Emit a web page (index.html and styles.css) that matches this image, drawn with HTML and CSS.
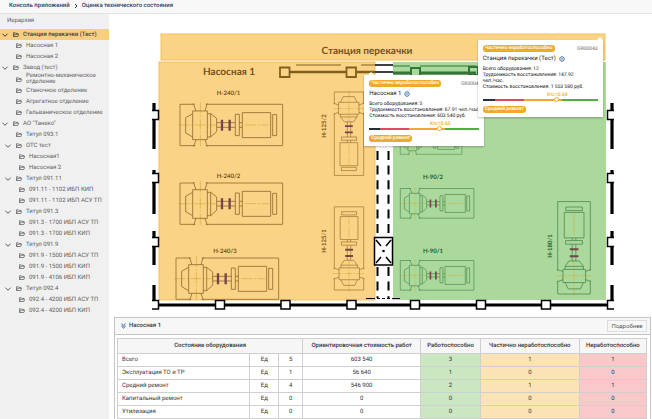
FILE: index.html
```html
<!DOCTYPE html>
<html lang="ru">
<head>
<meta charset="utf-8">
<title>Оценка технического состояния</title>
<link rel="stylesheet" href="styles.css">
</head>
<body>
<svg class="defs" aria-hidden="true">
  <symbol id="chevron" viewBox="0 0 8 8"><path d="M1.5 2.7 4 5.3 6.5 2.7"/></symbol>
  <symbol id="folder" viewBox="0 0 12 10"><path d="M1 9V1.5h3.5l1.2 1.3H9.500V4.500M1 9l2.300-4.500H11.500L9.600 9z"/></symbol>
  <symbol id="gear" viewBox="0 0 12 12"><circle cx="6" cy="6" r="4.500" stroke-width="1.500"/><circle cx="6" cy="6" r="1.600"/><path d="M6 0v2M6 10v2M0 6h2M10 6h2M1.800 1.800l1.400 1.400M8.800 8.800l1.400 1.400M10.200 1.800 8.800 3.200M3.200 8.800l-1.400 1.400"/></symbol>
  <g id="pump">
    <path class="axis" d="M61-6V130M-6 62H112M195 62H268"/>
    <path d="M44 0H0V124H46M77 0H308V124H77M40-3 48 20M82-3 75 20M48 106 41 127M75 106 82 127"/>
    <path d="M38 20H82V106H38ZM38 28 17 40V86L38 98M82 28H92L110 42V82L92 98H82M92 28V98"/>
    <path d="M110 55H166M110 69H166M166 30H178V94H166ZM178 55H187M178 69H187M187 25H272V100H187ZM278 31H290V94H278Z"/>
    <path class="coupling" d="M126 46V79M149 46V79"/>
  </g>
</svg>

<header class="topbar">
  <nav class="crumbs" aria-label="Навигация">
    <a href="#">Консоль приложений</a>
    <svg class="crumb-arrow" viewBox="0 0 6 8"><path d="M1.500 1 4.500 4 1.500 7"/></svg>
    <a href="#">Оценка технического состояния</a>
  </nav>
</header>

<div class="layout">
  <aside class="sidebar">
    <h2 class="sidebar-title">Иерархия</h2>
    <ul class="tree">
      <li class="node selected"><button class="toggle" aria-label="Свернуть"><svg><use href="#chevron"/></svg></button><svg class="folder"><use href="#folder"/></svg><a href="#">Станция перекачки (Тест)</a></li>
      <li class="node level-1"><span class="toggle"></span><svg class="folder"><use href="#folder"/></svg><a href="#">Насосная 1</a></li>
      <li class="node level-1"><span class="toggle"></span><svg class="folder"><use href="#folder"/></svg><a href="#">Насосная 2</a></li>
      <li class="node"><button class="toggle" aria-label="Свернуть"><svg><use href="#chevron"/></svg></button><svg class="folder"><use href="#folder"/></svg><a href="#">Завод (тест)</a></li>
      <li class="node level-1"><span class="toggle"></span><svg class="folder"><use href="#folder"/></svg><a href="#">Ремонтно-механическое отделение</a></li>
      <li class="node level-1"><span class="toggle"></span><svg class="folder"><use href="#folder"/></svg><a href="#">Станочное отделение</a></li>
      <li class="node level-1"><span class="toggle"></span><svg class="folder"><use href="#folder"/></svg><a href="#">Агрегатное отделение</a></li>
      <li class="node level-1"><span class="toggle"></span><svg class="folder"><use href="#folder"/></svg><a href="#">Гальваническое отделение</a></li>
      <li class="node"><button class="toggle" aria-label="Свернуть"><svg><use href="#chevron"/></svg></button><svg class="folder"><use href="#folder"/></svg><a href="#">АО "Танеко"</a></li>
      <li class="node level-1"><span class="toggle"></span><svg class="folder"><use href="#folder"/></svg><a href="#">Титул 093.1</a></li>
      <li class="node level-1"><button class="toggle" aria-label="Свернуть"><svg><use href="#chevron"/></svg></button><svg class="folder"><use href="#folder"/></svg><a href="#">ОТС тест</a></li>
      <li class="node level-2"><span class="toggle"></span><svg class="folder"><use href="#folder"/></svg><a href="#">Насосная1</a></li>
      <li class="node level-2"><span class="toggle"></span><svg class="folder"><use href="#folder"/></svg><a href="#">Насосная 2</a></li>
      <li class="node level-1"><button class="toggle" aria-label="Свернуть"><svg><use href="#chevron"/></svg></button><svg class="folder"><use href="#folder"/></svg><a href="#">Титул 091.11</a></li>
      <li class="node level-2"><span class="toggle"></span><svg class="folder"><use href="#folder"/></svg><a href="#">091.11 - 1102 ИБП КИП</a></li>
      <li class="node level-2"><span class="toggle"></span><svg class="folder"><use href="#folder"/></svg><a href="#">091.11 - 1102 ИБП АСУ ТП</a></li>
      <li class="node level-1"><button class="toggle" aria-label="Свернуть"><svg><use href="#chevron"/></svg></button><svg class="folder"><use href="#folder"/></svg><a href="#">Титул 091.3</a></li>
      <li class="node level-2"><span class="toggle"></span><svg class="folder"><use href="#folder"/></svg><a href="#">091.3 - 1700 ИБП АСУ ТП</a></li>
      <li class="node level-2"><span class="toggle"></span><svg class="folder"><use href="#folder"/></svg><a href="#">091.3 - 1700 ИБП КИП</a></li>
      <li class="node level-1"><button class="toggle" aria-label="Свернуть"><svg><use href="#chevron"/></svg></button><svg class="folder"><use href="#folder"/></svg><a href="#">Титул 091.9</a></li>
      <li class="node level-2"><span class="toggle"></span><svg class="folder"><use href="#folder"/></svg><a href="#">091.9 - 1500 ИБП АСУ ТП</a></li>
      <li class="node level-2"><span class="toggle"></span><svg class="folder"><use href="#folder"/></svg><a href="#">091.9 - 1500 ИБП КИП</a></li>
      <li class="node level-2"><span class="toggle"></span><svg class="folder"><use href="#folder"/></svg><a href="#">091.9 - 4106 ИБП КИП</a></li>
      <li class="node level-1"><button class="toggle" aria-label="Свернуть"><svg><use href="#chevron"/></svg></button><svg class="folder"><use href="#folder"/></svg><a href="#">Титул 092.4</a></li>
      <li class="node level-2"><span class="toggle"></span><svg class="folder"><use href="#folder"/></svg><a href="#">092.4 - 4200 ИБП АСУ ТП</a></li>
      <li class="node level-2"><span class="toggle"></span><svg class="folder"><use href="#folder"/></svg><a href="#">092.4 - 4200 ИБП КИП</a></li>
    </ul>
  </aside>

  <main class="content">
    <section class="plan">
      <svg class="plan-drawing" viewBox="109 14 543 301" role="img" aria-label="План станции перекачки">
        <!-- zones -->
        <rect class="zone-orange" x="161" y="34" width="444" height="26"/>
        <rect class="zone-orange" x="159" y="62" width="216" height="238"/>
        <rect class="zone-green" x="393" y="62" width="213" height="238"/>

        <!-- top wall -->
        <g class="wall-orange">
          <path d="M290 72H346M356 72H375" stroke-width="2.500"/>
          <path d="M296 65H341M361 65H375" stroke-width="1"/>
          <path d="M280 67.500H289.500V77H280ZM346.500 67.500H356V77H346.500Z" stroke-width="1.800"/>
        </g>
        <path class="wall" d="M375 72H393M375 65H393" stroke-width="1.500"/>
        <g class="wall-green">
          <path d="M393 73H410M420 73H476" stroke-width="3"/>
          <path d="M393 66H410M420 66H476" stroke-width="1"/>
          <path d="M411 68H420V76H411ZM469 67H478V75H469Z" stroke-width="2"/>
        </g>

        <!-- outer walls -->
        <path class="wall" stroke-width="3.200" d="M154 103V110M154 119V149M154 170V174M154 183V214M154 231V238M154 247V265M154 285V300M612 103V110M612 119V149M612 170V174M612 183V214M612 231V238M612 247V265M612 285V300"/>
        <path class="wall" stroke-width="3" d="M159 305H607"/>
        <path class="column" d="M152 110.500H158.500V119.500H152M152 173.500H158.500V182.500H152M152 237.500H158.500V246.500H152M152 300.500H158.500V309H152M614 110.500H607.500V119.500H614M614 173.500H607.500V182.500H614M614 237.500H607.500V246.500H614M614 300.500H607.500V309H614"/>
        <path class="column" d="M215.500 300.500h9v8.500h-9zM281 300.500h9v8.500h-9zM347 300.500h9v8.500h-9zM410.500 300.500h9v8.500h-9zM476.500 300.500h9v8.500h-9zM541.500 300.500h9v8.500h-9z"/>

        <!-- passage between halls -->
        <path class="wall passage" d="M377.500 151V236M388.500 151V236M377.500 267V298M388.500 267V298"/>
        <path class="wall" stroke-width="1" d="M366 298.500H375M377 298.500H380M382 298.500H385M387 298.500H390M392 298.500H400"/>
        <path class="shaft" d="M374.500 237.500H392.500V265H374.500ZM376 240 381 246M391 240 386 246M376 263 381 257M391 263 386 257"/>
        <circle cx="383.500" cy="251" r="1.300"/>

        <!-- equipment -->
        <g class="pump-orange">
          <use href="#pump" transform="translate(180 104.300) scale(.3333)"/>
          <use href="#pump" transform="translate(180 183) scale(.3333)"/>
          <use href="#pump" transform="translate(176 258) scale(.3333)"/>
          <use href="#pump" transform="translate(363.700 92) rotate(90) scale(.271 .237)"/>
          <use href="#pump" transform="translate(334.300 290) rotate(-90) scale(.27 .237)"/>
        </g>
        <g class="pump-green">
          <use href="#pump" transform="translate(400.300 129.500) scale(.2)"/>
          <use href="#pump" transform="translate(400.300 188.500) scale(.239)"/>
          <use href="#pump" transform="translate(400.300 260.500) scale(.239)"/>
          <use href="#pump" transform="translate(557.700 294) rotate(-90) scale(.3 .263)"/>
        </g>

        <!-- captions -->
        <g class="caption caption-orange">
          <text class="caption-title" x="367" y="54">Станция перекачки</text>
          <text class="caption-title" x="229" y="75">Насосная 1</text>
          <text x="228.500" y="95">Н-240/1</text>
          <text x="228.500" y="178">Н-240/2</text>
          <text x="225" y="253">Н-240/3</text>
          <text transform="translate(326 126) rotate(-90)">Н-125/2</text>
          <text transform="translate(326 241) rotate(-90)">Н-125/1</text>
        </g>
        <g class="caption caption-green">
          <text x="433" y="179">Н-90/2</text>
          <text x="433" y="253">Н-90/1</text>
          <text transform="translate(552 246) rotate(-90)">Н-180/1</text>
        </g>
      </svg>

      <article class="popup popup-pump-hall">
        <div class="popup-head"><span class="badge">Частично неработоспособно</span><span class="code">GR0004</span></div>
        <h3 class="popup-title">Насосная 1 <svg class="gear"><use href="#gear"/></svg></h3>
        <p>Всего оборудования: 5</p>
        <p>Трудоемкость восстановления: 67.91 чел./час.</p>
        <p>Стоимость восстановления: 603 540 руб.</p>
        <div class="scale"><span class="scale-value">Ктс=0.65</span><span class="scale-knob"></span></div>
        <span class="badge">Средний ремонт</span>
      </article>

      <article class="popup popup-station">
        <div class="popup-head"><span class="badge">Частично неработоспособно</span><span class="code">GR00043</span></div>
        <h3 class="popup-title">Станция перекачки (Тест) <svg class="gear"><use href="#gear"/></svg></h3>
        <p>Всего оборудования: 12</p>
        <p>Трудоемкость восстановления: 147.92<br>чел./час.</p>
        <p>Стоимость восстановления: 1 553 580 руб.</p>
        <div class="scale"><span class="scale-value">Ктс=0.64</span><span class="scale-knob"></span></div>
        <span class="badge">Средний ремонт</span>
      </article>
    </section>

    <section class="panel">
      <header class="panel-head">
        <svg class="collapse" viewBox="0 0 10 12"><path d="M1 1 5 4.500 9 1M1 4 5 7.500 9 4M1 7 5 10.500 9 7"/></svg>
        <h2>Насосная 1</h2>
        <button class="more">Подробнее</button>
      </header>
      <div class="panel-body">
        <table>
          <colgroup><col class="c-name"><col class="c-unit"><col class="c-count"><col class="c-cost"><col class="c-ok"><col class="c-part"><col class="c-bad"></colgroup>
          <thead>
            <tr><th colspan="3">Состояние оборудования</th><th>Ориентировочная стоимость работ</th><th>Работоспособно</th><th>Частично неработоспособно</th><th>Неработоспособно</th></tr>
          </thead>
          <tbody>
            <tr><td>Всего</td><td>Ед</td><td>5</td><td>603 540</td><td class="ok">3</td><td class="part">1</td><td class="bad">1</td></tr>
            <tr><td>Эксплуатация ТО и ТР</td><td>Ед</td><td>1</td><td>56 640</td><td class="ok">1</td><td class="part">0</td><td class="bad">0</td></tr>
            <tr><td>Средний ремонт</td><td>Ед</td><td>4</td><td>546 900</td><td class="ok">2</td><td class="part">1</td><td class="bad">1</td></tr>
            <tr><td>Капитальный ремонт</td><td>Ед</td><td>0</td><td>0</td><td class="ok">0</td><td class="part">0</td><td class="bad">0</td></tr>
            <tr><td>Утилизация</td><td>Ед</td><td>0</td><td>0</td><td class="ok">0</td><td class="part">0</td><td class="bad">0</td></tr>
          </tbody>
        </table>
      </div>
    </section>
  </main>
</div>
</body>
</html>
```

FILE: styles.css
```css
* { box-sizing: border-box; }
body {
  margin: 0;
  min-height: 100vh;
  display: flex;
  flex-direction: column;
  background: #fff;
  color: #333;
  font: 6px/8px Roboto, "Liberation Sans", sans-serif;
  text-rendering: geometricPrecision;
}
h2, h3, p, ul { margin: 0; padding: 0; }
a { color: inherit; text-decoration: none; }
button { margin: 0; padding: 0; border: 0; background: none; font: inherit; color: inherit; }
svg { fill: none; stroke: currentColor; }
.defs { position: absolute; width: 0; height: 0; }

.topbar { height: 14px; padding: 1px 9px; background: #f8f8f8; border-bottom: 1px solid #e4e4e4; }
.crumbs { display: flex; align-items: center; gap: 4px; line-height: 10px; font-weight: 500; color: #1f3c66; }
.crumb-arrow { width: 4px; height: 6px; stroke-width: 1.5; }

.layout { flex: 1; display: grid; grid-template-columns: 109px 1fr; }
.sidebar { background: #f0f0f0; color: #606060; }
.sidebar-title { padding: 3px 7px 4px; font-size: 6px; font-weight: 400; line-height: 8px; }
.tree { list-style: none; }
.node { display: flex; align-items: center; min-height: 11px; padding-left: 1px; line-height: 6px; }
.node.level-1 { padding-left: 4px; }
.node.level-2 { padding-left: 7px; }
.node.selected { background: #f9ce80; color: #3d3d3d; font-weight: 500; }
.toggle { flex: none; width: 8px; height: 8px; margin-right: 4px; }
.toggle svg { display: block; width: 8px; height: 8px; }
.folder { flex: none; width: 6px; height: 5px; margin-right: 4px; stroke-width: 1.5; }

.content { min-width: 0; }
.plan { position: relative; }
.plan-drawing { display: block; width: 100%; height: auto; stroke: none; }
.zone-orange { fill: #fbd387; stroke: #f3c05c; stroke-width: 1; }
.zone-green { fill: #abd99b; }
.wall { stroke: #000; }
.wall-orange { stroke: #80601c; }
.wall-green { stroke: #35733a; }
.column { stroke: #000; stroke-width: 1.500; fill: #fff; }
.passage { stroke-width: 2; stroke-dasharray: 9 5.600; }
.shaft { stroke: #000; stroke-width: 1.500; fill: #fff; }
.plan-drawing circle { fill: #000; }
.pump-orange { stroke: #956a2c; stroke-width: 2.500; }
.pump-green { stroke: #528c55; stroke-width: 3; }
.axis { stroke: #d8ac35; stroke-width: 2; stroke-dasharray: 34 5 5 5; }
.pump-green .axis { stroke: #97bc54; }
.coupling { stroke: #76454e; stroke-width: 7; }
.pump-green .coupling { stroke: #24577a; }
.caption { font: bold 6px Lato, "Open Sans", sans-serif; text-anchor: middle; }
.caption-title { font-size: 10px; }
.caption-orange { fill: #755018; }
.caption-green { fill: #245b2c; }

.popup {
  position: absolute;
  padding: 5px 5px 4px;
  background: #fff;
  box-shadow: 0 1px 2px #0004;
  line-height: 6px;
  font-size: 5px;
  color: #111;
}
.popup p { white-space: nowrap; }
.popup::before {
  content: "";
  position: absolute;
  bottom: 100%;
  border: 3px solid transparent;
  border-top: 0;
  border-bottom-color: #fff;
}
.popup-pump-hall { left: 47%; top: 20.400%; width: 22%; }
.popup-pump-hall::before { left: 4px; }
.popup-station { left: 67.900%; top: 8.700%; width: 23%; }
.popup-station::before { right: 0; }
.popup-head { display: flex; justify-content: space-between; align-items: center; }
.badge { display: inline-block; padding: 0 2px; border-radius: 3px; background: #f0a92c; color: #fff; font-size: 5px; font-weight: 500; line-height: 7px; white-space: nowrap; }
.code { font-size: 5px; color: #666; }
.popup-title { display: flex; align-items: center; gap: 3px; margin: 3px 0; font-size: 6px; font-weight: 400; line-height: 8px; }
.gear { width: 6px; height: 6px; color: #356797; }
.scale { position: relative; height: 2px; margin: 9px 0 5px; background: linear-gradient(90deg, #292d3d 10%, #e04a5c 10% 36%, #f0a92c 36% 69%, #52ad43 69%); }
.scale-value { position: absolute; left: 65%; bottom: 3px; transform: translateX(-50%); color: #f0a92c; font-weight: 500; line-height: 6px; }
.scale-knob { position: absolute; left: 65%; top: -2px; width: 5px; height: 5px; margin-left: -3px; border: 1px solid #f0a92c; border-radius: 50%; background: #fff; }

.panel { margin: 2px 1px 0 5px; border: 1px solid #c4c4c4; border-bottom: 0; }
.panel-head { display: flex; align-items: center; height: 17px; padding: 0 3px 0 6px; background: #f7f7f7; border-bottom: 1px solid #c4c4c4; }
.panel-head h2 { margin-left: 3px; font-size: 6px; font-weight: 500; }
.collapse { width: 5px; height: 6px; color: #27588f; stroke-width: 1.500; }
.more { margin-left: auto; width: 40px; height: 12px; border: 1px solid #ddd; color: #555; line-height: 10px; }
.panel-body { padding: 3px 3px 0 2px; }
table { width: 100%; table-layout: fixed; border-collapse: collapse; text-align: center; line-height: 8px; }
th, td { height: 13px; padding: 0; border: 1px solid #cfcfcf; }
th { height: 15px; background: #f6f6f6; font-weight: 500; white-space: nowrap; }
td:first-child { padding-left: 4px; text-align: left; }
.c-name { width: 25%; }
.c-unit { width: 5.500%; }
.c-count { width: 4.500%; }
.c-cost { width: 22.300%; }
.c-ok { width: 11.300%; }
.c-part { width: 18.700%; }
.ok { background: #cae7c1; }
.part { background: #fce3b5; }
.bad { background: #f9c9c9; }
```
